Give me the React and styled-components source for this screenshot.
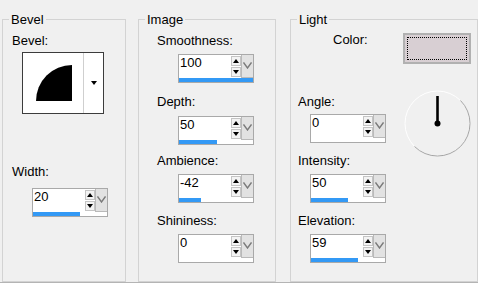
import React from 'react';
import styled, { createGlobalStyle } from 'styled-components';

const GlobalStyle = createGlobalStyle`
  html, body {
    margin: 0;
    padding: 0;
    background: #f0f0f0;
  }
  body {
    font-family: "Liberation Sans", Arial, sans-serif;
    font-size: 13px;
    color: #000;
  }
`;

const Dialog = styled.div`
  width: 478px;
  height: 283px;
  box-sizing: border-box;
  display: flex;
  align-items: stretch;
  padding: 12px 0 0 2px;
  border-bottom: 1px solid #b4b4b4;
  background: #f0f0f0;
`;

const Group = styled.fieldset`
  margin: 0 ${(p) => p.$gap || 0}px 0 0;
  padding: 0;
  min-width: 0;
  width: ${(p) => p.$w}px;
  box-sizing: border-box;
  border: 1px solid #d3d3d3;
  display: flex;
  flex-direction: column;
  align-items: flex-start;
`;

const Legend = styled.legend`
  margin-left: 6px;
  padding: 0 2px;
  line-height: 15px;
  font-size: 13px;
`;

const Label = styled.div`
  margin: ${(p) => p.$mt || 0}px 0 0 ${(p) => p.$ml || 0}px;
  line-height: 15px;
  white-space: nowrap;
`;

/* bevel picker */
const Picker = styled.div`
  width: 82px;
  height: 62px;
  box-sizing: border-box;
  margin: 4px 0 0 19px;
  border: 1px solid #3c3c3c;
  background: #fff;
  display: flex;
`;

const PickerPreview = styled.div`
  width: 60px;
  height: 60px;
`;

const PickerButton = styled.div`
  flex: 1;
  border-left: 1px solid #cfcfcf;
  display: flex;
  align-items: center;
  justify-content: center;
`;

const DownTriangle = styled.span`
  width: 0;
  height: 0;
  border-left: 3px solid transparent;
  border-right: 3px solid transparent;
  border-top: 4px solid #000;
`;

const UpTriangle = styled.span`
  width: 0;
  height: 0;
  border-left: 3px solid transparent;
  border-right: 3px solid transparent;
  border-bottom: 4px solid #000;
`;

/* numeric spin with slider bar */
const Spin = styled.div`
  width: 76px;
  height: 29px;
  box-sizing: border-box;
  margin: ${(p) => p.$mt || 0}px 0 0 ${(p) => p.$ml || 0}px;
  border: 1px solid #a9a9a9;
  background: #fff;
  display: flex;
  flex-direction: column;
`;

const SpinRow = styled.div`
  display: flex;
  height: 23px;
`;

const SpinValue = styled.div`
  flex: 1;
  padding-left: 1px;
  line-height: 15px;
`;

const Arrows = styled.div`
  width: 10px;
  display: flex;
  flex-direction: column;
  padding: 1px 0;
  box-sizing: border-box;
`;

const ArrowButton = styled.div`
  flex: 1;
  box-sizing: border-box;
  border: 1px solid #c4c4c4;
  background: #f3f3f3;
  display: flex;
  align-items: center;
  justify-content: center;
  & + & {
    margin-top: 1px;
  }
`;

const Chevron = styled.div`
  width: 12px;
  box-sizing: border-box;
  background: #e2e2e2;
  border-left: 1px solid #b9b9b9;
  border-bottom: 1px solid #b9b9b9;
  display: flex;
  justify-content: center;
  padding-top: 7px;
`;

const Track = styled.div`
  height: 4px;
  background: #fff;
`;

const Fill = styled.div`
  height: 100%;
  background: #3399f5;
`;

/* light group */
const ColorRow = styled.div`
  display: flex;
  align-items: flex-start;
  align-self: stretch;
  margin-top: 5px;
`;

const Swatch = styled.div`
  position: relative;
  width: 68px;
  height: 31px;
  box-sizing: border-box;
  margin: 1px 6px 0 auto;
  border: 2px solid #b1b1b1;
  background: #d8cfd3;
  &::after {
    content: '';
    position: absolute;
    inset: 2px;
    border: 1px dotted #000;
  }
`;

const LightBody = styled.div`
  display: flex;
  align-items: flex-start;
  align-self: stretch;
  margin-top: 26px;
`;

const Column = styled.div`
  display: flex;
  flex-direction: column;
  align-items: flex-start;
`;

const DialBox = styled.div`
  width: 67px;
  height: 67px;
  margin: 0 6px 0 auto;
`;

const SpinField = ({ value, fill, mt, ml }) => (
  <Spin $mt={mt} $ml={ml}>
    <SpinRow>
      <SpinValue>{value}</SpinValue>
      <Arrows>
        <ArrowButton>
          <UpTriangle />
        </ArrowButton>
        <ArrowButton>
          <DownTriangle />
        </ArrowButton>
      </Arrows>
      <Chevron>
        <svg width="9" height="7" viewBox="0 0 9 7">
          <polyline points="0.5,0.5 4.5,6 8.5,0.5" fill="none" stroke="#7a7a7a" strokeWidth="1.4" />
        </svg>
      </Chevron>
    </SpinRow>
    <Track>
      <Fill style={{ width: fill }} />
    </Track>
  </Spin>
);

const Dial = () => (
  <DialBox>
    <svg width="67" height="67" viewBox="0 0 67 67">
      <circle cx="33.5" cy="33.5" r="32.5" fill="none" stroke="#ffffff" strokeWidth="1" />
      <path d="M56.5 10.5 A32.5 32.5 0 0 1 10.5 56.5" fill="none" stroke="#a3a3a3" strokeWidth="1" />
      <line x1="33.5" y1="33.5" x2="33.5" y2="6" stroke="#000" strokeWidth="2.6" />
      <circle cx="33.5" cy="33.5" r="3" fill="#000" />
    </svg>
  </DialBox>
);

const App = () => (
  <>
    <GlobalStyle />
    <Dialog>
      <Group $w={124} $gap={12}>
        <Legend>Bevel</Legend>
        <Label $mt={6} $ml={9}>Bevel:</Label>
        <Picker>
          <PickerPreview>
            <svg width="60" height="60" viewBox="0 0 60 60">
              <path d="M49 48 H13 A36 36 0 0 1 49 12 Z" fill="#000" />
            </svg>
          </PickerPreview>
          <PickerButton>
            <DownTriangle />
          </PickerButton>
        </Picker>
        <Label $mt={50} $ml={9}>Width:</Label>
        <SpinField value="20" fill={47} mt={9} ml={29} />
      </Group>

      <Group $w={138} $gap={14}>
        <Legend>Image</Legend>
        <Label $mt={6} $ml={18}>Smoothness:</Label>
        <SpinField value="100" fill={74} mt={6} ml={39} />
        <Label $mt={11} $ml={18}>Depth:</Label>
        <SpinField value="50" fill={38} mt={7} ml={39} />
        <Label $mt={8} $ml={18}>Ambience:</Label>
        <SpinField value="-42" fill={22} mt={6} ml={39} />
        <Label $mt={10} $ml={18}>Shininess:</Label>
        <SpinField value="0" fill={0} mt={6} ml={39} />
      </Group>

      <Group $w={188}>
        <Legend>Light</Legend>
        <ColorRow>
          <Label $ml={42}>Color:</Label>
          <Swatch />
        </ColorRow>
        <LightBody>
          <Column>
            <Label $mt={4} $ml={7}>Angle:</Label>
            <SpinField value="0" fill={0} mt={5} ml={19} />
            <Label $mt={10} $ml={7}>Intensity:</Label>
            <SpinField value="50" fill={37} mt={6} ml={19} />
            <Label $mt={10} $ml={7}>Elevation:</Label>
            <SpinField value="59" fill={47} mt={6} ml={19} />
          </Column>
          <Dial />
        </LightBody>
      </Group>
    </Dialog>
  </>
);

export default App;
